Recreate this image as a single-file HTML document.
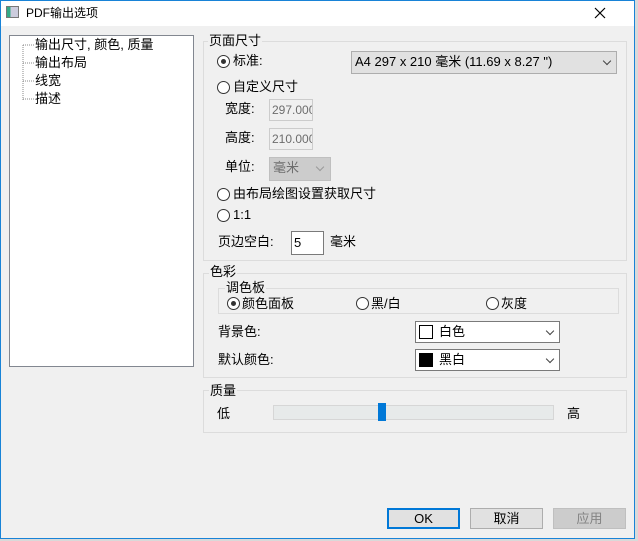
<!DOCTYPE html>
<html><head><meta charset="utf-8"><style>
*{box-sizing:border-box;margin:0;padding:0}
body{width:638px;height:541px;background:#d9d9d9;font-family:"Liberation Sans","Noto Sans CJK SC",sans-serif;font-size:13px;color:#000;position:relative;overflow:hidden}
.a{position:absolute}
.win{left:0;top:0;width:635px;height:539px;background:#f0f0f0;border:1px solid #1883d7}
.title{left:1px;top:1px;width:633px;height:25px;background:#fff}
.grp{border:1px solid #dcdcdc}
.lbl{background:#f0f0f0;padding:0 1px;line-height:14px}
.t{line-height:14px;white-space:nowrap}
.radio{width:13px;height:13px;border:1px solid #333;border-radius:50%;background:#fff}
.radio.on::after{content:"";position:absolute;left:3px;top:3px;width:5px;height:5px;border-radius:50%;background:#333}
.chev{width:6px;height:6px;border-right:1px solid #444;border-bottom:1px solid #444;transform:rotate(45deg)}
.btn{height:21px;border:1px solid #adadad;background:#e1e1e1;text-align:center;line-height:19px}
</style></head><body>
<div class="a win"></div>
<div class="a title"></div>
<div class="a" style="left:6px;top:6px;width:13px;height:12px;border:1px solid #777;background:linear-gradient(90deg,#3a8 0 30%,#ccd 30%)"></div>
<div class="a t" style="left:26px;top:6px;font-size:12px">PDF输出选项</div>
<svg class="a" style="left:594px;top:7px" width="12" height="12"><path d="M1 1L11 11M11 1L1 11" stroke="#000" stroke-width="1.2"/></svg>

<div class="a" style="left:9px;top:35px;width:185px;height:332px;background:#fff;border:1px solid #828790"></div>
<svg class="a" style="left:22px;top:44px" width="14" height="60"><path d="M1 1V56M1 1H12M1 19H12M1 37H12M1 55H12" stroke="#888" stroke-dasharray="1 1" fill="none"/></svg>
<div class="a t" style="left:35px;top:38px">输出尺寸, 颜色, 质量</div>
<div class="a t" style="left:35px;top:56px">输出布局</div>
<div class="a t" style="left:35px;top:74px">线宽</div>
<div class="a t" style="left:35px;top:92px">描述</div>

<div class="a grp" style="left:203px;top:41px;width:424px;height:220px"></div>
<div class="a lbl" style="left:208px;top:34px">页面尺寸</div>
<div class="a radio on" style="left:217px;top:55px"></div><div class="a t" style="left:233px;top:54px">标准:</div>
<div class="a" style="left:351px;top:51px;width:266px;height:23px;background:#e1e1e1;border:1px solid #adadad"></div>
<div class="a t" style="left:355px;top:55px">A4 297 x 210 毫米 (11.69 x 8.27 ")</div>
<div class="a chev" style="left:604px;top:58px"></div>
<div class="a radio" style="left:217px;top:81px"></div><div class="a t" style="left:233px;top:80px">自定义尺寸</div>
<div class="a t" style="left:225px;top:102px">宽度:</div>
<div class="a" style="left:269px;top:99px;width:44px;height:22px;border:1px solid #ccc;background:#f0f0f0;overflow:hidden"><div class="a t" style="left:2px;top:3px;color:#6d6d6d;font-size:12px">297.000</div></div>
<div class="a t" style="left:225px;top:131px">高度:</div>
<div class="a" style="left:269px;top:128px;width:44px;height:22px;border:1px solid #ccc;background:#f0f0f0;overflow:hidden"><div class="a t" style="left:2px;top:3px;color:#6d6d6d;font-size:12px">210.000</div></div>
<div class="a t" style="left:225px;top:160px">单位:</div>
<div class="a" style="left:269px;top:157px;width:62px;height:24px;border:1px solid #bfbfbf;background:#cccccc"></div>
<div class="a t" style="left:273px;top:161px;color:#6d6d6d">毫米</div>
<div class="a chev" style="left:317px;top:164px;border-color:#999"></div>
<div class="a radio" style="left:217px;top:188px"></div><div class="a t" style="left:233px;top:187px">由布局绘图设置获取尺寸</div>
<div class="a radio" style="left:217px;top:209px"></div><div class="a t" style="left:233px;top:208px">1:1</div>
<div class="a t" style="left:218px;top:235px">页边空白:</div>
<div class="a" style="left:291px;top:231px;width:33px;height:24px;border:1px solid #7a7a7a;background:#fff"></div>
<div class="a t" style="left:294px;top:236px">5</div>
<div class="a t" style="left:330px;top:235px">毫米</div>

<div class="a grp" style="left:203px;top:273px;width:424px;height:105px"></div>
<div class="a lbl" style="left:209px;top:265px">色彩</div>
<div class="a grp" style="left:218px;top:288px;width:401px;height:26px"></div>
<div class="a lbl" style="left:225px;top:281px">调色板</div>
<div class="a radio on" style="left:227px;top:297px"></div><div class="a t" style="left:242px;top:297px">颜色面板</div>
<div class="a radio" style="left:356px;top:297px"></div><div class="a t" style="left:371px;top:297px">黑/白</div>
<div class="a radio" style="left:486px;top:297px"></div><div class="a t" style="left:501px;top:297px">灰度</div>
<div class="a t" style="left:218px;top:325px">背景色:</div>
<div class="a" style="left:415px;top:321px;width:145px;height:22px;border:1px solid #7a7a7a;background:#fff"></div>
<div class="a" style="left:419px;top:325px;width:14px;height:14px;border:1px solid #000;background:#fff"></div>
<div class="a t" style="left:439px;top:325px">白色</div>
<div class="a chev" style="left:547px;top:328px"></div>
<div class="a t" style="left:218px;top:353px">默认颜色:</div>
<div class="a" style="left:415px;top:349px;width:145px;height:22px;border:1px solid #7a7a7a;background:#fff"></div>
<div class="a" style="left:419px;top:353px;width:14px;height:14px;background:#000"></div>
<div class="a t" style="left:439px;top:353px">黑白</div>
<div class="a chev" style="left:547px;top:356px"></div>

<div class="a grp" style="left:203px;top:390px;width:424px;height:43px"></div>
<div class="a lbl" style="left:209px;top:384px">质量</div>
<div class="a t" style="left:217px;top:407px">低</div>
<div class="a" style="left:273px;top:405px;width:281px;height:15px;border:1px solid #d6d6d6;background:#e7eaea"></div>
<div class="a" style="left:378px;top:403px;width:8px;height:18px;background:#0078d7"></div>
<div class="a t" style="left:567px;top:407px">高</div>

<div class="a btn" style="left:387px;top:508px;width:73px;border:2px solid #0078d7;line-height:17px">OK</div>
<div class="a btn" style="left:470px;top:508px;width:73px">取消</div>
<div class="a btn" style="left:553px;top:508px;width:73px;color:#838383;background:#ccc;border-color:#bfbfbf">应用</div>
</body></html>
